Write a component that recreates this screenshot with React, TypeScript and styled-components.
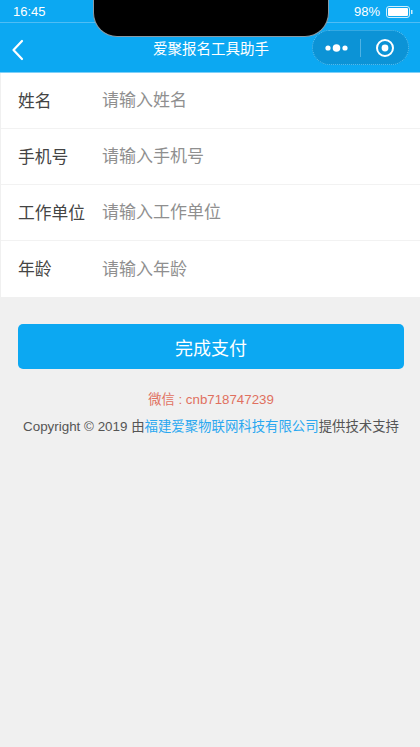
import React from 'react';
import styled, { createGlobalStyle } from 'styled-components';

const GlobalStyle = createGlobalStyle`
  html, body, #root {
    height: 100%;
  }
  body {
    margin: 0;
    background: #f0f0f0;
    font-family: 'Liberation Sans', 'Noto Sans CJK SC', sans-serif;
    overflow: hidden;
  }
`;

const Page = styled.div`
  position: relative;
  width: 420px;
  height: 747px;
  background: #f0f0f0;
`;

const Header = styled.header`
  background: #0ca8f2;
  border-bottom: 1px solid #7fd0f8;
  color: #fff;
`;

const StatusBar = styled.div`
  height: 23px;
  display: flex;
  align-items: center;
  justify-content: space-between;
  padding: 1px 6px 0 13px;
  box-sizing: border-box;
  border-bottom: 1px solid #4fbdf5;
  font-size: 13px;
  font-weight: 400;
`;

const Battery = styled.div`
  display: flex;
  align-items: center;
  gap: 6px;
`;

const Notch = styled.div`
  position: absolute;
  top: -1px;
  left: 93px;
  width: 236px;
  height: 38px;
  background: #000;
  border: 1px solid #8a9aa5;
  border-top: none;
  box-sizing: border-box;
  border-radius: 0 0 24px 24px;
`;

const NavBar = styled.div`
  position: relative;
  height: 49px;
  display: flex;
  align-items: center;
  justify-content: center;
`;

const BackButton = styled.div`
  position: absolute;
  left: 11px;
  top: 16px;
  display: flex;
`;

const Title = styled.div`
  font-size: 14.5px;
  margin-left: 2px;
`;

const Capsule = styled.div`
  position: absolute;
  left: 312px;
  top: 7px;
  width: 97px;
  height: 35px;
  display: flex;
  align-items: center;
  border-radius: 18px;
  background: #0c93d6;
  border: 1px dotted #5cc0f0;
  box-sizing: border-box;
`;

const CapsuleSide = styled.div`
  flex: 1;
  display: flex;
  justify-content: center;
  align-items: center;
`;

const CapsuleDivider = styled.div`
  width: 1px;
  height: 18px;
  background: #4fb3e4;
`;

const Form = styled.div`
  margin-left: 1px;
  background: #fff;
`;

const Row = styled.label`
  height: 56px;
  display: flex;
  align-items: center;
  padding-left: 17px;
  box-sizing: border-box;
  border-bottom: 1px solid #f2f2f2;
  &:last-child {
    border-bottom: none;
  }
`;

const RowLabel = styled.span`
  width: 84px;
  font-size: 16.8px;
  line-height: 20px;
  margin-top: 2px;
  color: #444;
`;

const RowInput = styled.input`
  flex: 1;
  min-width: 0;
  border: none;
  outline: none;
  padding: 0;
  margin-top: 1px;
  background: transparent;
  font-family: inherit;
  font-size: 17px;
  color: #444;
  &::placeholder {
    color: #8f8f8f;
    opacity: 1;
  }
`;

const Footer = styled.div`
  padding: 27px 16px 0 18px;
  display: flex;
  flex-direction: column;
  align-items: stretch;
`;

const PayButton = styled.button`
  height: 45px;
  border: none;
  border-radius: 5px;
  background: #0ca8f2;
  color: #fff;
  font-family: inherit;
  font-size: 18px;
`;

const Wechat = styled.div`
  margin-top: 22px;
  text-align: center;
  font-size: 13.3px;
  line-height: 18px;
  color: #e0705f;
`;

const Copyright = styled.div`
  margin-top: 9px;
  margin-left: -2px;
  margin-right: -2px;
  text-align: center;
  white-space: nowrap;
  font-size: 13.4px;
  line-height: 18px;
  color: #555;
`;

const CompanyLink = styled.a`
  color: #2aa8f0;
  text-decoration: none;
`;

const fields = [
  { label: '姓名', placeholder: '请输入姓名' },
  { label: '手机号', placeholder: '请输入手机号' },
  { label: '工作单位', placeholder: '请输入工作单位' },
  { label: '年龄', placeholder: '请输入年龄' },
];

export default function App() {
  return (
    <Page>
      <GlobalStyle />
      <Header>
        <StatusBar>
          <span>16:45</span>
          <Battery>
            <span>98%</span>
            <svg width="28" height="12" viewBox="0 0 28 12">
              <rect x="0.5" y="0.5" width="23" height="11" rx="2.5" fill="none" stroke="#cdeefd" />
              <rect x="2" y="2" width="20" height="8" rx="1" fill="#fff" />
              <rect x="25" y="4" width="1.5" height="4" fill="#cdeefd" />
            </svg>
          </Battery>
        </StatusBar>
        <NavBar>
          <BackButton>
            <svg width="14" height="22" viewBox="0 0 14 22">
              <path d="M11 2 L2.5 11 L11 20" fill="none" stroke="#fff" strokeWidth="2.2" strokeLinecap="round" strokeLinejoin="round" />
            </svg>
          </BackButton>
          <Title>爱聚报名工具助手</Title>
          <Capsule>
            <CapsuleSide>
              <svg width="26" height="10" viewBox="0 0 26 10">
                <circle cx="4" cy="5" r="2.6" fill="#fff" />
                <circle cx="12.5" cy="5" r="3.8" fill="#fff" />
                <circle cx="21" cy="5" r="2.6" fill="#fff" />
              </svg>
            </CapsuleSide>
            <CapsuleDivider />
            <CapsuleSide>
              <svg width="20" height="20" viewBox="0 0 20 20">
                <circle cx="10" cy="10" r="8" fill="none" stroke="#fff" strokeWidth="2" />
                <circle cx="10" cy="10" r="3.4" fill="#fff" />
              </svg>
            </CapsuleSide>
          </Capsule>
        </NavBar>
      </Header>
      <Notch />
      <Form>
        {fields.map((f) => (
          <Row key={f.label}>
            <RowLabel>{f.label}</RowLabel>
            <RowInput placeholder={f.placeholder} />
          </Row>
        ))}
      </Form>
      <Footer>
        <PayButton>完成支付</PayButton>
        <Wechat>微信 : cnb718747239</Wechat>
        <Copyright>
          Copyright © 2019 由<CompanyLink>福建爱聚物联网科技有限公司</CompanyLink>提供技术支持
        </Copyright>
      </Footer>
    </Page>
  );
}
